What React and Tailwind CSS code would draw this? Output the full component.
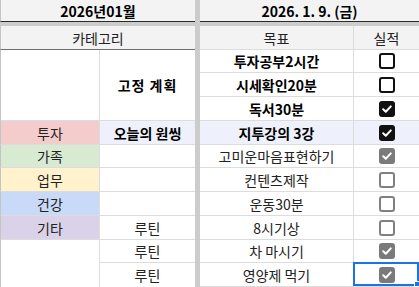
import React from "react";

const ROW = [
  "row-start-4",
  "row-start-5",
  "row-start-6",
  "row-start-7",
  "row-start-8",
  "row-start-9",
  "row-start-10",
  "row-start-11",
  "row-start-12",
  "row-start-13",
];

const goals = [
  { t: "투자공부2시간", bold: true, check: "dark", on: false },
  { t: "시세확인20분", bold: true, check: "dark", on: false },
  { t: "독서30분", bold: true, check: "dark", on: true },
  { t: "지투강의 3강", bold: true, check: "dark", on: true, lav: true },
  { t: "고미운마음표현하기", check: "gray", on: true },
  { t: "컨텐츠제작", check: "gray", on: false },
  { t: "운동30분", check: "gray", on: false },
  { t: "8시기상", check: "gray", on: false },
  { t: "차 마시기", check: "gray", on: true },
  { t: "영양제 먹기", check: "gray", on: true, sel: true },
];

function Box({ tone, on }) {
  const dark = tone === "dark";
  const cls = on
    ? dark
      ? "bg-[#111111] border-[#111111]"
      : "bg-[#7a7a7a] border-[#7a7a7a]"
    : dark
    ? "bg-white border-[#111111]"
    : "bg-white border-[#808080]";
  return (
    <div className={`w-[16px] h-[16px] rounded-[3px] border-2 flex items-center justify-center ${cls}`}>
      {on && (
        <svg width="12" height="12" viewBox="0 0 12 12">
          <path d="M2.2 6.2 L4.8 8.8 L9.8 3.4" fill="none" stroke="white" strokeWidth="2" strokeLinecap="round" strokeLinejoin="round" />
        </svg>
      )}
    </div>
  );
}

export default function App() {
  return (
    <div className="w-[419px] h-[287px] overflow-hidden bg-white font-['Noto_Sans_CJK_KR','Noto_Sans',sans-serif] text-[14px] leading-none text-[#222222]">
      <div className="grid grid-cols-[100px_95px_5px_154px_65px] grid-rows-[22px_4px_24px_23px_24px_24px_24px_23px_24px_24px_24px_23px_24px]">
        {/* header 1 */}
        <div className="col-start-1 col-span-2 row-start-1 bg-[#f3f3f3] border-b border-l border-b-[#2a2a2a] border-l-[#c4c4c4] flex items-center justify-center font-bold text-black">
          2026년01월
        </div>
        <div className="col-start-4 col-span-2 row-start-1 bg-[#f3f3f3] border-b border-[#2a2a2a] flex items-center justify-center font-bold text-black">
          2026. 1. 9. (금)
        </div>
        {/* frozen dividers */}
        <div className="col-start-1 col-span-5 row-start-2 bg-[#cccccc]"></div>
        <div className="col-start-3 row-start-1 row-span-13 bg-[#cccccc]"></div>

        {/* header 2 */}
        <div className="col-start-1 col-span-2 row-start-3 bg-[#f3f3f3] border-b border-l border-b-[#6e6e6e] border-l-[#c4c4c4] flex items-center justify-center">
          카테고리
        </div>
        <div className="col-start-4 row-start-3 bg-[#f3f3f3] border-b border-r border-[#dcdcdc] flex items-center justify-center">
          목표
        </div>
        <div className="col-start-5 row-start-3 bg-[#f3f3f3] border-b border-[#dcdcdc] flex items-center justify-center">
          실적
        </div>

        {/* category column */}
        <div className="col-start-1 row-start-4 row-span-3 border-b border-r border-l border-b-[#dcdcdc] border-r-[#dcdcdc] border-l-[#c4c4c4]"></div>
        <div className="col-start-1 row-start-7 bg-[#f4cccc] border-b border-r border-l border-b-[#dcdcdc] border-r-[#dcdcdc] border-l-[#c4c4c4] flex items-center justify-center">
          투자
        </div>
        <div className="col-start-1 row-start-8 bg-[#d9ead3] border-b border-r border-l border-b-[#dcdcdc] border-r-[#dcdcdc] border-l-[#c4c4c4] flex items-center justify-center">
          가족
        </div>
        <div className="col-start-1 row-start-9 bg-[#fff2cc] border-b border-r border-l border-b-[#dcdcdc] border-r-[#dcdcdc] border-l-[#c4c4c4] flex items-center justify-center">
          업무
        </div>
        <div className="col-start-1 row-start-10 bg-[#c9daf8] border-b border-r border-l border-b-[#dcdcdc] border-r-[#dcdcdc] border-l-[#c4c4c4] flex items-center justify-center">
          건강
        </div>
        <div className="col-start-1 row-start-11 bg-[#d9d2e9] border-b border-r border-l border-b-[#dcdcdc] border-r-[#dcdcdc] border-l-[#c4c4c4] flex items-center justify-center">
          기타
        </div>
        <div className="col-start-1 row-start-12 row-span-2 border-r border-l border-r-[#dcdcdc] border-l-[#c4c4c4]"></div>

        {/* plan column */}
        <div className="col-start-2 row-start-4 row-span-3 border-b border-[#dcdcdc] flex items-center justify-center font-bold text-black tracking-[1px]">
          고정 계획
        </div>
        <div className="col-start-2 row-start-7 bg-[#eef0fb] border-b border-[#dcdcdc] flex items-center justify-center font-bold text-black">
          오늘의 원씽
        </div>
        <div className="col-start-2 row-start-8 border-b border-[#dcdcdc]"></div>
        <div className="col-start-2 row-start-9 border-b border-[#dcdcdc]"></div>
        <div className="col-start-2 row-start-10 border-b border-[#dcdcdc]"></div>
        <div className="col-start-2 row-start-11 border-b border-[#dcdcdc] flex items-center justify-center">
          루틴
        </div>
        <div className="col-start-2 row-start-12 border-b border-[#dcdcdc] flex items-center justify-center">
          루틴
        </div>
        <div className="col-start-2 row-start-13 flex items-center justify-center">
          루틴
        </div>

        {/* goals + checks */}
        {goals.map((g, i) => (
          <React.Fragment key={i}>
            <div
              className={`col-start-4 ${ROW[i]} border-b border-r border-[#dcdcdc] flex items-center justify-center ${
                g.lav ? "bg-[#eef0fb]" : "bg-white"
              } ${g.bold ? "font-bold text-black" : "text-[#222222]"}`}
            >
              {g.t}
            </div>
            <div
              className={`relative col-start-5 ${ROW[i]} border-b border-[#dcdcdc] flex items-center justify-center ${
                g.lav ? "bg-[#eef0fb]" : "bg-white"
              }`}
            >
              <Box tone={g.check} on={g.on} />
              {g.sel && (
                <>
                  <div className="absolute left-[-1px] top-[-1px] right-0 bottom-0 border-2 border-[#1a73e8]"></div>
                  <div className="absolute right-[-1px] bottom-[-1px] w-[6px] h-[6px] bg-[#1a73e8] border border-white"></div>
                </>
              )}
            </div>
          </React.Fragment>
        ))}
      </div>
    </div>
  );
}
